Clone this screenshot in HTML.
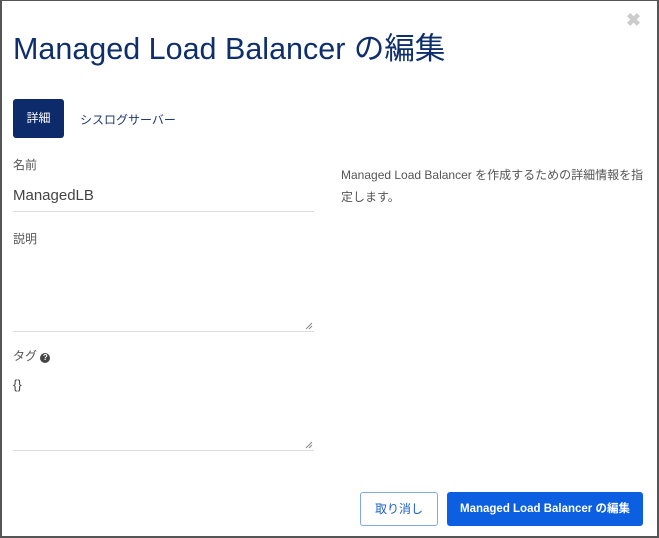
<!DOCTYPE html>
<html><head><meta charset="utf-8"><style>
*{box-sizing:border-box;margin:0;padding:0}
body{width:659px;height:538px;background:#fff;font-family:"Liberation Sans","Noto Sans CJK JP",sans-serif;position:relative;overflow:hidden}
.frame{position:absolute;left:0;top:0;width:659px;height:538px;border:2px solid #555;border-top-width:1px}
.a{position:absolute;white-space:nowrap}
.line{position:absolute;height:1px;background:#ddd}
.grip{position:absolute;width:8px;height:8px}
</style></head><body>
<div class="frame"></div>
<div class="a" style="left:626px;top:10px;font-size:18px;color:#ccc;font-weight:bold">✖</div>
<div class="a" style="left:13px;top:24px;font-size:30.5px;color:#0e2f6c">Managed Load Balancer の編集</div>
<div class="a" style="left:13px;top:99px;width:51px;height:39px;background:#0d2a6b;border-radius:3px;color:#fff;font-size:12px;line-height:39px;text-align:center">詳細</div>
<div class="a" style="left:80px;top:111px;font-size:12px;color:#1f3a6e">シスログサーバー</div>
<div class="a" style="left:13px;top:156px;font-size:12px;color:#555">名前</div>
<div class="a" style="left:13px;top:187px;font-size:15px;color:#444">ManagedLB</div>
<div class="line" style="left:13px;top:211px;width:301px"></div>
<div class="a" style="left:13px;top:230px;font-size:12px;color:#555">説明</div>
<div class="line" style="left:13px;top:331px;width:301px"></div>
<svg class="grip" style="left:305px;top:322px" viewBox="0 0 8 8"><path d="M7 1L1 7M7 4L4 7" stroke="#888" stroke-width="1"/></svg>
<div class="a" style="left:13px;top:347px;font-size:12px;color:#555">タグ <span style="display:inline-block;width:10px;height:10px;border-radius:50%;background:#444;color:#fff;font-size:8px;line-height:10px;text-align:center;font-weight:bold;vertical-align:0px">?</span></div>
<div class="a" style="left:13px;top:377px;font-size:13px;color:#444">{}</div>
<div class="line" style="left:13px;top:450px;width:301px"></div>
<svg class="grip" style="left:305px;top:441px" viewBox="0 0 8 8"><path d="M7 1L1 7M7 4L4 7" stroke="#888" stroke-width="1"/></svg>
<div class="a" style="left:341px;top:164px;font-size:12px;color:#555;line-height:22px;white-space:normal;width:305px">Managed Load Balancer を作成するための詳細情報を指定します。</div>
<div class="a" style="left:360px;top:492px;width:78px;height:34px;border:1px solid #7fa8e6;border-radius:3px;color:#1a5fc8;font-size:12px;line-height:32px;text-align:center">取り消し</div>
<div class="a" style="left:447px;top:492px;width:196px;height:34px;background:#0b5fe0;border-radius:3px;color:#fff;font-size:11.5px;font-weight:bold;line-height:34px;text-align:center">Managed Load Balancer の編集</div>
</body></html>
